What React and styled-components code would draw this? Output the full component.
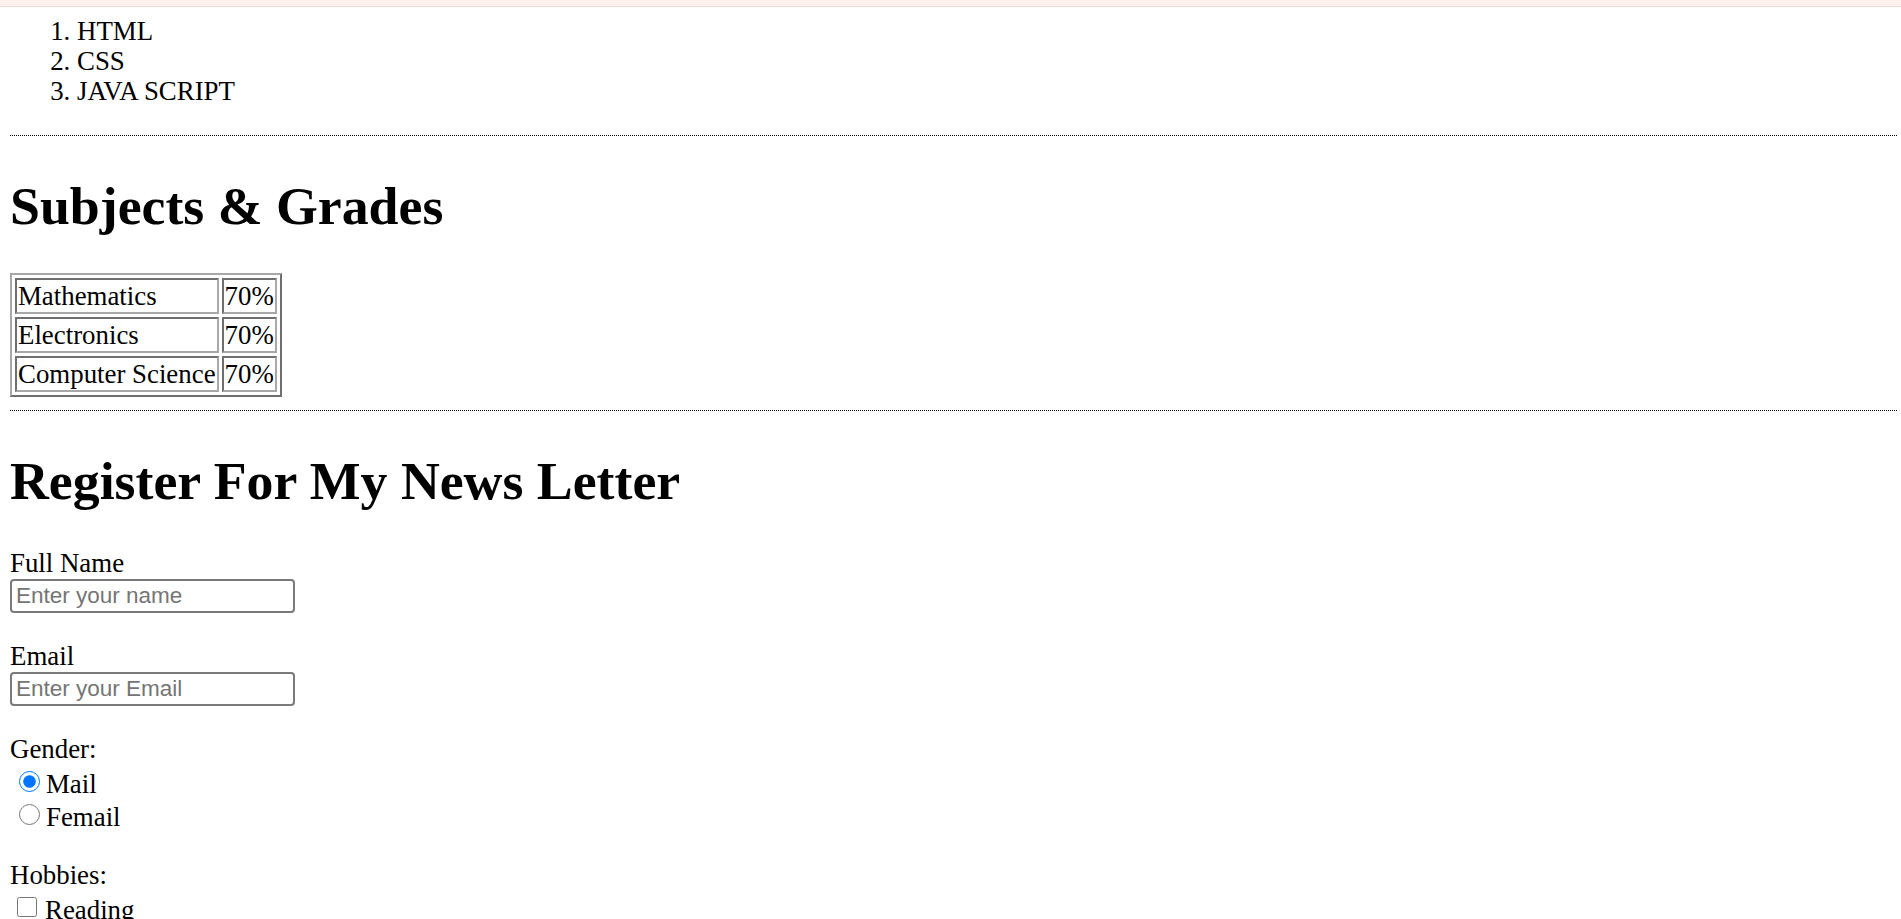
import React from "react";
import styled, { createGlobalStyle } from "styled-components";

const GlobalStyle = createGlobalStyle`
  html, body {
    margin: 0;
    padding: 0;
    background: #fff;
    overflow: hidden;
  }
  body {
    font-family: "Liberation Serif", "Times New Roman", serif;
    font-size: 26.85px;
    line-height: 30px;
    color: #000;
  }
`;

const TopBand = styled.div`
  height: 6px;
  background: #fdf1ed;
  border-bottom: 1px solid #f6d8d0;
`;

const Page = styled.main`
  padding: 0 4px 0 10px;
`;

const SkillList = styled.ol`
  margin: 9px 0 0;
  padding-left: 67px;
  list-style: decimal;

  li {
    line-height: 30px;
  }
`;

const Divider = styled.hr`
  margin: ${(p) => p.$top}px 0 0;
  height: 0;
  border: none;
  border-top: 1px dotted #000;
`;

const Heading = styled.h1`
  margin: 40px 0 37px;
  font-size: 53.8px;
  line-height: 60px;
  font-weight: bold;
`;

const GradeTable = styled.table`
  border-collapse: separate;
  border-spacing: 3px;
  border: 2px solid;
  border-color: #a8a8a8 #6f6f6f #6f6f6f #a8a8a8;
`;

const Cell = styled.td`
  padding: 1px;
  border: 2px solid;
  border-color: #6f6f6f #a8a8a8 #a8a8a8 #6f6f6f;
  line-height: 30px;
  white-space: nowrap;
  text-align: left;
  vertical-align: middle;
`;

const Form = styled.form`
  display: flex;
  flex-direction: column;
`;

const Field = styled.div`
  display: flex;
  flex-direction: column;
  align-items: flex-start;
  margin-bottom: ${(p) => p.$after}px;
`;

const FieldLabel = styled.label`
  display: block;
  height: 30px;
`;

const TextInput = styled.input`
  box-sizing: border-box;
  margin-top: 1px;
  width: 285px;
  height: 34px;
  padding: 0 4px;
  border: 2px solid #7a7a7a;
  border-radius: 4px;
  background: #fff;
  font-family: "Liberation Sans", Arial, sans-serif;
  font-size: 22.5px;
  color: #000;

  &::placeholder {
    color: #757575;
  }
`;

const ChoiceRow = styled.label`
  display: flex;
  align-items: flex-start;
  height: 33px;
`;

const Radio = styled.input.attrs({ type: "radio" })`
  width: 21px;
  height: 21px;
  margin: 7px 6px 0 9px;
  flex-shrink: 0;
`;

const Check = styled.input.attrs({ type: "checkbox" })`
  width: 20px;
  height: 20px;
  margin: 7px 8px 0 7px;
  flex-shrink: 0;
`;

const ChoiceText = styled.span`
  padding-top: 5px;
  line-height: 30px;
`;

const grades = [
  { subject: "Mathematics", score: "70%" },
  { subject: "Electronics", score: "70%" },
  { subject: "Computer Science", score: "70%" },
];

export default function App() {
  return (
    <>
      <GlobalStyle />
      <TopBand />
      <Page>
        <SkillList>
          <li>HTML</li>
          <li>CSS</li>
          <li>JAVA SCRIPT</li>
        </SkillList>

        <Divider $top={29} />
        <Heading>Subjects &amp; Grades</Heading>
        <GradeTable>
          <tbody>
            {grades.map((g) => (
              <tr key={g.subject}>
                <Cell>{g.subject}</Cell>
                <Cell>{g.score}</Cell>
              </tr>
            ))}
          </tbody>
        </GradeTable>

        <Divider $top={13} />
        <Heading>Register For My News Letter</Heading>
        <Form onSubmit={(e) => e.preventDefault()}>
          <Field $after={28}>
            <FieldLabel htmlFor="name">Full Name</FieldLabel>
            <TextInput id="name" type="text" placeholder="Enter your name" />
          </Field>
          <Field $after={28}>
            <FieldLabel htmlFor="email">Email</FieldLabel>
            <TextInput id="email" type="email" placeholder="Enter your Email" />
          </Field>
          <Field $after={30}>
            <FieldLabel as="span">Gender:</FieldLabel>
            <ChoiceRow>
              <Radio name="gender" defaultChecked />
              <ChoiceText>Mail</ChoiceText>
            </ChoiceRow>
            <ChoiceRow>
              <Radio name="gender" />
              <ChoiceText>Femail</ChoiceText>
            </ChoiceRow>
          </Field>
          <Field $after={0}>
            <FieldLabel as="span">Hobbies:</FieldLabel>
            <ChoiceRow>
              <Check />
              <ChoiceText>Reading</ChoiceText>
            </ChoiceRow>
          </Field>
        </Form>
      </Page>
    </>
  );
}
